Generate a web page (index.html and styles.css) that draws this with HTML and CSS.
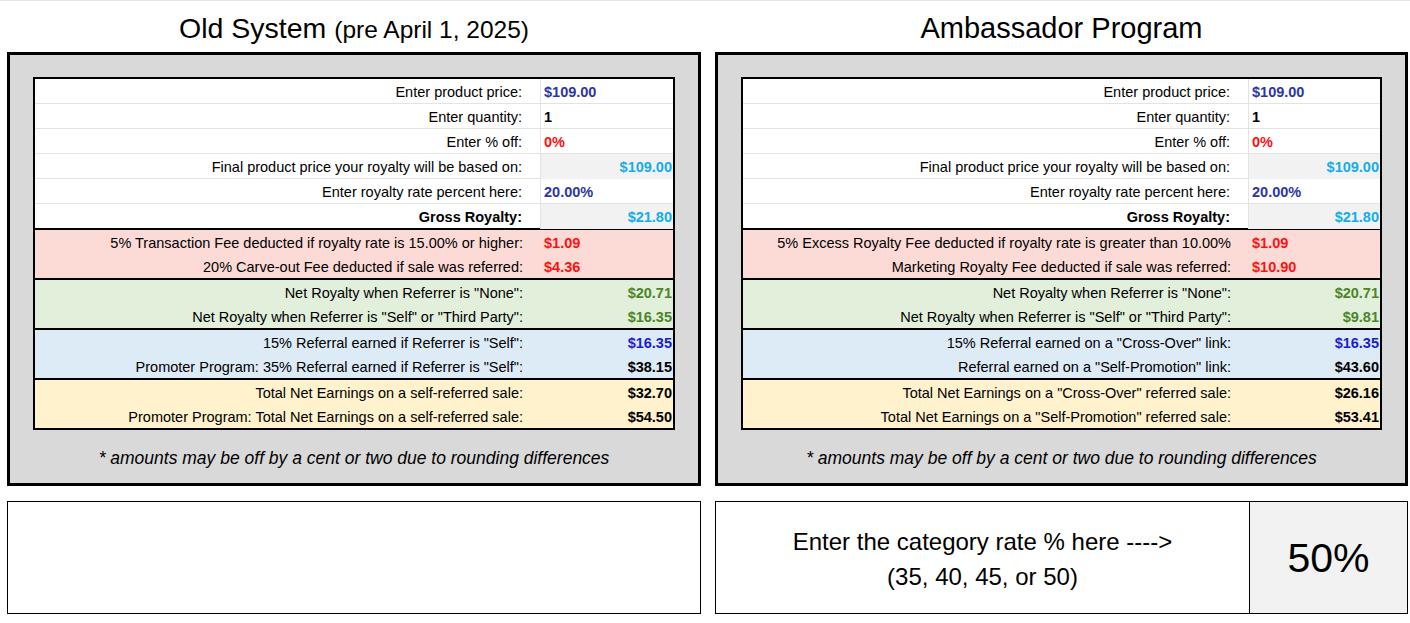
FILE: index.html
```html
<!DOCTYPE html>
<html lang="en">
<head>
<meta charset="utf-8">
<title>Royalty Calculator</title>
<link rel="stylesheet" href="styles.css">
</head>
<body>
<div class="page">
  <section class="col">
    <h1 class="title">Old System <span class="sub">(pre April 1, 2025)</span></h1>
    <div class="panel">
      <div class="calc">
        <div class="sec sec-white">
          <div class="row"><span class="lbl">Enter product price:</span><span class="val c-navy">$109.00</span></div>
          <div class="row"><span class="lbl">Enter quantity:</span><span class="val">1</span></div>
          <div class="row"><span class="lbl">Enter % off:</span><span class="val c-red">0%</span></div>
          <div class="row"><span class="lbl">Final product price your royalty will be based on:</span><span class="val r shade c-sky">$109.00</span></div>
          <div class="row"><span class="lbl">Enter royalty rate percent here:</span><span class="val c-navy">20.00%</span></div>
          <div class="row"><span class="lbl b">Gross Royalty:</span><span class="val r shade c-sky">$21.80</span></div>
        </div>
        <div class="sec sec-pink">
          <div class="row"><span class="lbl">5% Transaction Fee deducted if royalty rate is 15.00% or higher:</span><span class="val c-red">$1.09</span></div>
          <div class="row"><span class="lbl">20% Carve-out Fee deducted if sale was referred:</span><span class="val c-red">$4.36</span></div>
        </div>
        <div class="sec sec-green">
          <div class="row"><span class="lbl">Net Royalty when Referrer is "None":</span><span class="val r c-green">$20.71</span></div>
          <div class="row"><span class="lbl">Net Royalty when Referrer is "Self" or "Third Party":</span><span class="val r c-green">$16.35</span></div>
        </div>
        <div class="sec sec-blue">
          <div class="row"><span class="lbl">15% Referral earned if Referrer is "Self":</span><span class="val r c-blue">$16.35</span></div>
          <div class="row"><span class="lbl">Promoter Program: 35% Referral earned if Referrer is "Self":</span><span class="val r">$38.15</span></div>
        </div>
        <div class="sec sec-yellow">
          <div class="row"><span class="lbl">Total Net Earnings on a self-referred sale:</span><span class="val r">$32.70</span></div>
          <div class="row"><span class="lbl">Promoter Program: Total Net Earnings on a self-referred sale:</span><span class="val r">$54.50</span></div>
        </div>
      </div>
      <p class="note">* amounts may be off by a cent or two due to rounding differences</p>
    </div>
    <div class="box"></div>
  </section>

  <section class="col">
    <h1 class="title title-lg">Ambassador Program</h1>
    <div class="panel">
      <div class="calc">
        <div class="sec sec-white">
          <div class="row"><span class="lbl">Enter product price:</span><span class="val c-navy">$109.00</span></div>
          <div class="row"><span class="lbl">Enter quantity:</span><span class="val">1</span></div>
          <div class="row"><span class="lbl">Enter % off:</span><span class="val c-red">0%</span></div>
          <div class="row"><span class="lbl">Final product price your royalty will be based on:</span><span class="val r shade c-sky">$109.00</span></div>
          <div class="row"><span class="lbl">Enter royalty rate percent here:</span><span class="val c-navy">20.00%</span></div>
          <div class="row"><span class="lbl b">Gross Royalty:</span><span class="val r shade c-sky">$21.80</span></div>
        </div>
        <div class="sec sec-pink">
          <div class="row"><span class="lbl">5% Excess Royalty Fee deducted if royalty rate is greater than 10.00%</span><span class="val c-red">$1.09</span></div>
          <div class="row"><span class="lbl">Marketing Royalty Fee deducted if sale was referred:</span><span class="val c-red">$10.90</span></div>
        </div>
        <div class="sec sec-green">
          <div class="row"><span class="lbl">Net Royalty when Referrer is "None":</span><span class="val r c-green">$20.71</span></div>
          <div class="row"><span class="lbl">Net Royalty when Referrer is "Self" or "Third Party":</span><span class="val r c-green">$9.81</span></div>
        </div>
        <div class="sec sec-blue">
          <div class="row"><span class="lbl">15% Referral earned on a "Cross-Over" link:</span><span class="val r c-blue">$16.35</span></div>
          <div class="row"><span class="lbl">Referral earned on a "Self-Promotion" link:</span><span class="val r">$43.60</span></div>
        </div>
        <div class="sec sec-yellow">
          <div class="row"><span class="lbl">Total Net Earnings on a "Cross-Over" referred sale:</span><span class="val r">$26.16</span></div>
          <div class="row"><span class="lbl">Total Net Earnings on a "Self-Promotion" referred sale:</span><span class="val r">$53.41</span></div>
        </div>
      </div>
      <p class="note">* amounts may be off by a cent or two due to rounding differences</p>
    </div>
    <div class="box box-split">
      <div class="prompt">Enter the category rate % here ----&gt;<br>(35, 40, 45, or 50)</div>
      <div class="rate">50%</div>
    </div>
  </section>
</div>
</body>
</html>
```

FILE: styles.css
```css
* { box-sizing: border-box; }

body {
  margin: 0;
  background: #ffffff;
  color: #000000;
  font-family: "Liberation Sans", Arial, sans-serif;
  border-top: 1px solid #e6e6e6;
}

.page {
  display: grid;
  grid-template-columns: 694px 693px;
  column-gap: 14px;
  padding-left: 7px;
}

.col {
  display: flex;
  flex-direction: column;
}

.title {
  margin: 0;
  height: 51px;
  padding-top: 3px;
  display: flex;
  align-items: center;
  justify-content: center;
  font-size: 28.5px;
  font-weight: normal;
  white-space: nowrap;
}

.title-lg { font-size: 29px; }

.title .sub {
  font-size: 24.5px;
  margin-left: 8px;
  padding-top: 3px;
}

.panel {
  border: 3px solid #000;
  background: #d9d9d9;
  padding: 22px 23px 0;
  height: 434px;
}

.calc {
  border: 2px solid #000;
  background: #fff;
}

.sec + .sec { border-top: 2px solid #000; }

.sec-pink { background: #fcdbd7; }
.sec-green { background: #e2efda; }
.sec-blue { background: #ddebf7; }
.sec-yellow { background: #fff2cc; }

.row {
  display: grid;
  grid-template-columns: 506px 1fr;
  height: 24px;
}

.sec-white .row {
  height: 25px;
  border-bottom: 1px solid #e3e3e3;
}

.sec-white .row:last-child {
  height: 24px;
  border-bottom: none;
}

.sec-white .lbl { border-right: 1px solid #e3e3e3; }

.lbl {
  font-size: 14.5px;
  line-height: 24px;
  padding-top: 1px;
  text-align: right;
  padding-right: 18px;
  white-space: nowrap;
}

.lbl.b { font-weight: bold; }

.val {
  font-size: 14.5px;
  font-weight: bold;
  line-height: 24px;
  padding-top: 1px;
  padding-left: 3px;
  white-space: nowrap;
}

.val.r {
  text-align: right;
  padding-left: 0;
  padding-right: 1px;
}

.shade { background: #f2f2f2; }

.c-navy { color: #2b35a9; }
.c-red { color: #ff1010; }
.c-sky { color: #11aeea; }
.c-green { color: #4c8529; }
.c-blue { color: #1c1dcc; }

.note {
  margin: 0;
  height: 53px;
  padding-top: 3px;
  display: flex;
  align-items: center;
  justify-content: center;
  font-size: 17.5px;
  font-style: italic;
}

.box {
  margin-top: 15px;
  height: 113px;
  border: 1px solid #000;
  background: #fff;
}

.box-split {
  display: grid;
  grid-template-columns: 1fr 158px;
}

.prompt {
  display: flex;
  align-items: center;
  justify-content: center;
  text-align: center;
  font-size: 24px;
  line-height: 35px;
  padding-top: 2px;
}

.rate {
  border-left: 1px solid #000;
  background: #f2f2f2;
  display: flex;
  align-items: center;
  justify-content: center;
  font-size: 41px;
  padding-top: 2px;
}
```
